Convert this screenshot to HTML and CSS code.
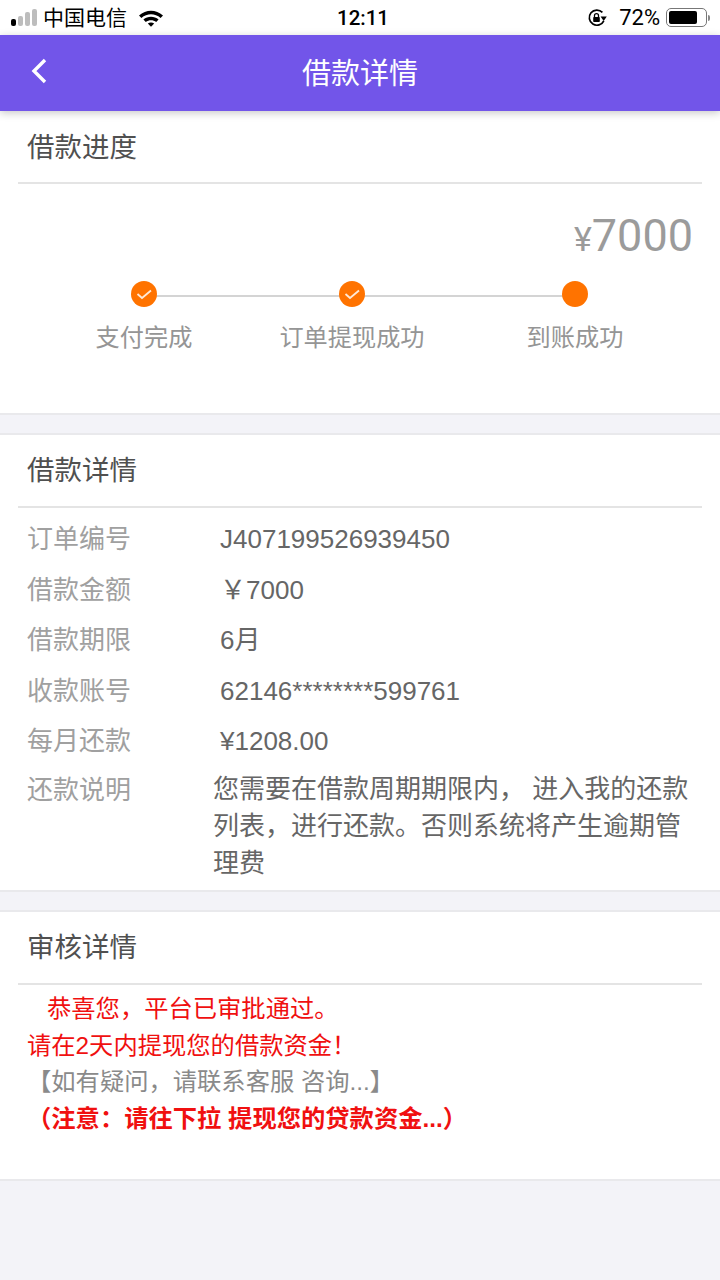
FILE: index.html
```html
<!DOCTYPE html>
<html lang="zh-CN">
<head>
    <meta charset="UTF-8">
    <meta name="viewport" content="width=device-width, initial-scale=1.0">
    <title>借款详情</title>
    <link rel="stylesheet" href="styles.css">
</head>
<body>
    <div class="status-bar">
        <div class="status-left">
            <div class="signal">
                <span class="bar b1"></span>
                <span class="bar b2"></span>
                <span class="bar b3"></span>
                <span class="bar b4"></span>
            </div>
            <span class="carrier">中国电信</span>
            <svg class="wifi" width="26" height="18" viewBox="0 0 26 18">
                <path d="M1 6.5C8 0 18 0 25 6.5L22.6 9C17 4 9 4 3.4 9Z" fill="#000"/>
                <path d="M5.4 10.6C9.8 6.8 16.2 6.8 20.6 10.6L18.2 13C15.2 10.5 10.8 10.5 7.8 13Z" fill="#000"/>
                <path d="M9.8 14.6C11.6 13.2 14.4 13.2 16.2 14.6L13 17.8Z" fill="#000"/>
            </svg>
        </div>
        <div class="clock">12:11</div>
        <div class="status-right">
            <svg class="lock" width="20" height="20" viewBox="0 0 20 20">
                <path d="M16.8 12.8A7.6 7.6 0 1 1 15.4 4.4" fill="none" stroke="#000" stroke-width="1.7"/>
                <path d="M13.6 8.6L19.8 8.6L16.7 13Z" fill="#000"/>
                <rect x="6.2" y="9" width="6.6" height="5" rx="0.8" fill="#000"/>
                <path d="M7.5 9V7.6A2 2 0 0 1 11.5 7.6V9" fill="none" stroke="#000" stroke-width="1.3"/>
            </svg>
            <span class="percent">72%</span>
            <div class="battery"><div class="battery-fill"></div></div>
            <div class="battery-tip"></div>
        </div>
    </div>

    <header class="nav">
        <svg class="back" width="18" height="28" viewBox="0 0 18 28">
            <path d="M15 3L4 14L15 25" fill="none" stroke="#fff" stroke-width="3.4"/>
        </svg>
        <h1 class="nav-title">借款详情</h1>
    </header>

    <section class="card progress-card">
        <h2 class="card-title">借款进度</h2>
        <div class="amount"><span class="yen">¥</span>7000</div>
        <div class="steps">
            <div class="step">
                <div class="dot">
                    <svg width="26" height="26" viewBox="0 0 26 26">
                        <path d="M6.5 13L11 17L20 9.5" fill="none" stroke="#ffe9d6" stroke-width="1.8"/>
                    </svg>
                </div>
                <div class="step-label">支付完成</div>
            </div>
            <div class="step">
                <div class="dot">
                    <svg width="26" height="26" viewBox="0 0 26 26">
                        <path d="M6.5 13L11 17L20 9.5" fill="none" stroke="#ffe9d6" stroke-width="1.8"/>
                    </svg>
                </div>
                <div class="step-label">订单提现成功</div>
            </div>
            <div class="step">
                <div class="dot"></div>
                <div class="step-label">到账成功</div>
            </div>
        </div>
    </section>

    <section class="card detail-card">
        <h2 class="card-title">借款详情</h2>
        <div class="rows">
            <div class="row"><span class="row-key">订单编号</span><span class="row-val">J407199526939450</span></div>
            <div class="row"><span class="row-key">借款金额</span><span class="row-val">￥7000</span></div>
            <div class="row"><span class="row-key">借款期限</span><span class="row-val">6月</span></div>
            <div class="row"><span class="row-key">收款账号</span><span class="row-val">62146********599761</span></div>
            <div class="row"><span class="row-key">每月还款</span><span class="row-val">¥1208.00</span></div>
            <div class="row row-note"><span class="row-key">还款说明</span><span class="row-val">您需要在借款周期期限内， 进入我的还款列表，进行还款。否则系统将产生逾期管理费</span></div>
        </div>
    </section>

    <section class="card audit-card">
        <h2 class="card-title">审核详情</h2>
        <div class="audit-text">
            <p class="red indent">恭喜您，平台已审批通过。</p>
            <p class="red">请在2天内提现您的借款资金！</p>
            <p class="gray">【如有疑问，请联系客服 咨询...】</p>
            <p class="red strong">（注意：请往下拉 提现您的贷款资金...）</p>
        </div>
    </section>
</body>
</html>
```

FILE: styles.css
```css
* {
    box-sizing: border-box;
}

body {
    margin: 0;
    background: #f3f3f8;
    height: 1280px;
    overflow: hidden;
    font-family: "Liberation Sans", "Noto Sans CJK SC", sans-serif;
}

.status-bar {
    height: 35px;
    background: #fff;
    display: grid;
    grid-template-columns: 1fr auto 1fr;
    align-items: center;
    color: #000;
}

.status-left {
    display: flex;
    align-items: center;
    padding-left: 11px;
}

.signal {
    display: flex;
    align-items: flex-end;
    gap: 2px;
    height: 17px;
    margin-right: 6px;
}

.bar {
    width: 5px;
    border-radius: 2px;
    background: #bdbdbd;
}

.b1 { height: 7px; background: #000; }
.b2 { height: 10px; }
.b3 { height: 14px; }
.b4 { height: 17px; }

.carrier {
    font-size: 21px;
    margin-bottom: 3px;
}

.wifi {
    margin-left: 11px;
}

.clock {
    font-size: 20.5px;
    font-weight: 500;
    font-family: "Roboto", sans-serif;
    padding-left: 6px;
}

.status-right {
    display: flex;
    align-items: center;
    justify-content: flex-end;
    padding-right: 10px;
}

.lock {
    margin-right: 12px;
}

.percent {
    font-size: 22px;
    font-family: "Roboto", sans-serif;
    margin-right: 6px;
}

.battery {
    width: 41px;
    height: 19px;
    border: 1px solid #777;
    border-radius: 5px;
    padding: 2px;
}

.battery-fill {
    width: 28px;
    height: 100%;
    background: #000;
    border-radius: 2px;
}

.battery-tip {
    width: 2px;
    height: 6px;
    margin-left: 1px;
    background: #888;
    border-radius: 0 2px 2px 0;
}

.nav {
    height: 76px;
    background: #7255e9;
    display: flex;
    align-items: center;
    justify-content: center;
    position: relative;
    box-shadow: 0 2px 8px rgba(0, 0, 0, 0.22);
}

.back {
    position: absolute;
    left: 30px;
    top: 22px;
}

.nav-title {
    margin: 0 0 4px;
    color: #fff;
    font-size: 29px;
    font-weight: normal;
}

.card {
    background: #fff;
    border-bottom: 2px solid #e9e9ec;
    margin-bottom: 18px;
}

.detail-card,
.audit-card {
    border-top: 2px solid #e9e9ec;
}

.card-title {
    margin: 0 18px;
    padding-left: 9px;
    height: 73px;
    line-height: 72px;
    font-size: 27.5px;
    font-weight: normal;
    color: #505050;
    border-bottom: 2px solid #e4e4e4;
}

.progress-card {
    height: 304px;
}

.progress-card .card-title {
    line-height: 74px;
}

.amount {
    margin-top: 25px;
    padding-right: 27px;
    text-align: right;
    font-size: 45px;
    line-height: 54px;
    color: #9b9b9b;
    font-family: "Roboto", sans-serif;
}

.yen {
    font-size: 34px;
}

.steps {
    display: flex;
    margin-top: 15px;
    padding-left: 40px;
}

.step {
    width: 208px;
    display: flex;
    flex-direction: column;
    align-items: center;
    position: relative;
}

.step:last-child {
    margin-left: 15px;
}

.step:not(:last-child)::after {
    content: "";
    position: absolute;
    top: 14px;
    left: 104px;
    width: 222px;
    height: 2px;
    background: #d4d4d4;
}

.dot {
    width: 26px;
    height: 26px;
    border-radius: 50%;
    background: #ff7300;
    position: relative;
    z-index: 1;
}

.dot svg {
    display: block;
}

.step-label {
    margin-top: 14px;
    font-size: 24.2px;
    line-height: 34px;
    color: #959595;
    white-space: nowrap;
}

.detail-card {
    height: 459px;
}

.rows {
    padding: 6px 0 0 27px;
}

.row {
    display: flex;
    height: 50.5px;
    align-items: center;
    font-size: 26px;
    line-height: 30px;
}

.row-key {
    width: 193px;
    flex: none;
    color: #a0a0a0;
}

.row-val {
    color: #666;
}

.row-note {
    height: auto;
    align-items: flex-start;
    padding-top: 8px;
}

.row-note .row-val {
    margin-left: -7px;
    width: 482px;
    line-height: 37px;
    margin-top: -4px;
}

.audit-card {
    height: 271px;
}

.audit-text {
    padding: 6px 0 0 27px;
    font-size: 24.3px;
}

.audit-text p {
    margin: 0;
    line-height: 36.7px;
}

.red {
    color: #f01010;
}

.gray {
    color: #8a8a8a;
}

.strong {
    font-weight: bold;
}

.indent {
    padding-left: 20px;
}
```
